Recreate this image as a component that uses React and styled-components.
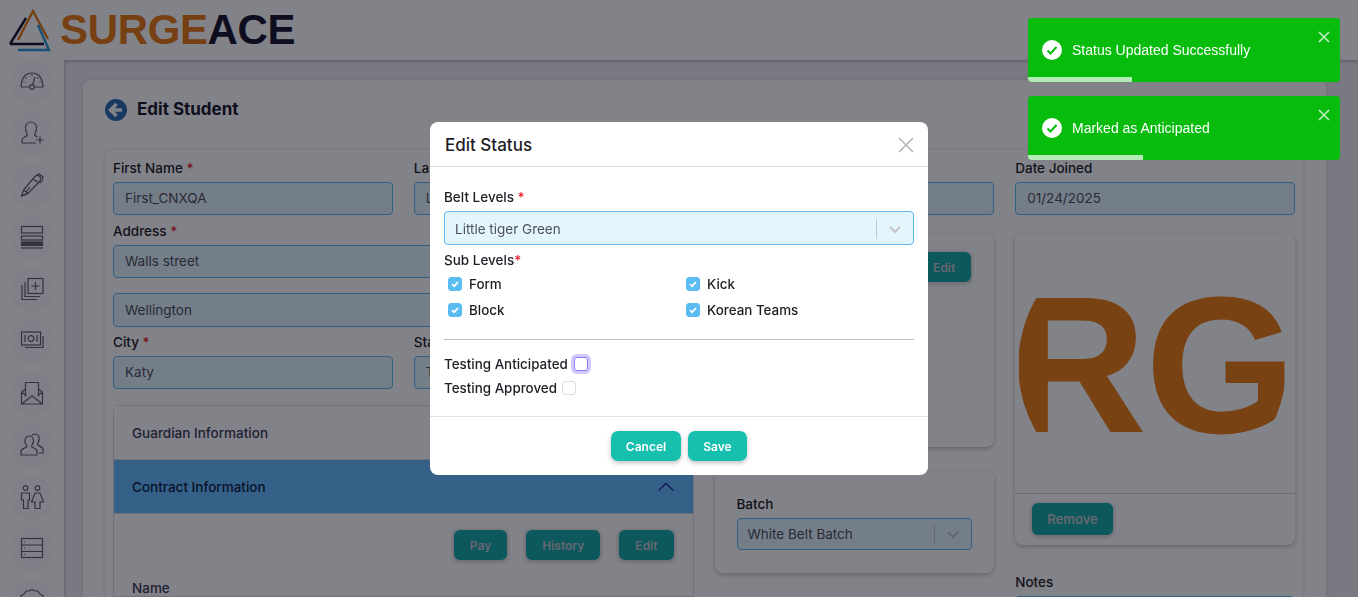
import React from "react";
import styled, { createGlobalStyle } from "styled-components";

const Global = createGlobalStyle`
    html, body {
        margin: 0;
        height: 100%;
        overflow: hidden;
    }
    body {
        font-family: Inter, "Noto Sans", sans-serif;
        color: #1d1d24;
    }
    * {
        box-sizing: border-box;
    }
`;

const Page = styled.div`
    height: 100vh;
    overflow: hidden;
    background: #fff;
    display: flex;
    flex-direction: column;
`;

const Header = styled.header`
    height: 60px;
    flex: none;
    padding-left: 8px;
    display: flex;
    align-items: center;
    gap: 8px;
    background: #fefefe;
`;

const LogoText = styled.div`
    font-family: "Liberation Sans", Arial, sans-serif;
    font-weight: bold;
    font-size: 42px;
    line-height: 60px;
    letter-spacing: -0.35px;
    color: #15152a;
    span {
        color: #e67a10;
    }
`;

const Body = styled.div`
    flex: 1;
    display: flex;
    min-height: 0;
`;

const Sidebar = styled.nav`
    width: 64px;
    flex: none;
    padding-top: 1px;
    display: flex;
    flex-direction: column;
    align-items: center;
    gap: 12px;
    background: #fff;
`;

const NavItem = styled.div`
    width: 40px;
    height: 40px;
    flex: none;
    border-radius: 50%;
    background: #fbfbfc;
    box-shadow: 0 1px 4px rgba(0, 0, 0, 0.08);
    display: flex;
    align-items: center;
    justify-content: center;
    svg {
        width: 24px;
        height: 24px;
        fill: none;
        stroke: #5e5e6c;
        stroke-width: 1.2;
    }
`;

const Main = styled.main`
    flex: 1;
    min-width: 0;
    padding: 20px 32px 0 19px;
    background: #ecedf1;
    box-shadow: inset 1px 2px 3px rgba(0, 0, 0, 0.2);
`;

const Card = styled.section`
    background: #fff;
    border-radius: 8px 8px 0 0;
    padding: 19px 23px 0 22px;
    height: 640px;
    box-shadow: 0 0 4px rgba(0, 0, 0, 0.1);
`;

const TitleRow = styled.div`
    display: flex;
    align-items: center;
    gap: 10px;
    height: 22px;
    margin-bottom: 29px;
    svg {
        width: 22px;
        height: 22px;
    }
`;

const Title = styled.h1`
    margin: 0 0 2px;
    font-size: 17px;
    font-weight: 700;
    color: #17172a;
`;

const FormBox = styled.div`
    padding: 8px;
    height: 600px;
    border-radius: 8px;
    background: #fff;
    box-shadow: 0 0 4px rgba(0, 0, 0, 0.14);
    display: grid;
    grid-template-columns: repeat(4, 1fr);
    grid-template-rows: 57px 1fr;
    column-gap: 21px;
    row-gap: 6px;
`;

const Label = styled.label`
    display: block;
    height: 20px;
    line-height: 20px;
    margin-bottom: 4px;
    font-size: 13.5px;
    font-weight: 500;
    white-space: nowrap;
    color: #1d1d24;
    b {
        color: #e8131f;
        font-weight: 500;
    }
`;

const Input = styled.div`
    height: ${(p) => (p.$tall ? 34 : 33)}px;
    padding: 0 11px;
    line-height: ${(p) => (p.$tall ? 33 : 31)}px;
    font-size: 13.5px;
    color: #4f4f58;
    background: #e3f6fd;
    border: 1px solid #60b8f2;
    border-radius: 4px;
    white-space: nowrap;
    overflow: hidden;
    margin-bottom: ${(p) => p.$gap || 0}px;
`;

const LeftBlock = styled.div`
    grid-column: span 2;
    min-width: 0;
`;

const Split = styled.div`
    display: grid;
    grid-template-columns: 1fr 1fr;
    column-gap: 21px;
    margin-bottom: 16px;
`;

const Accordion = styled.div`
    border: 1px solid #dcdce4;
    border-radius: 6px 6px 0 0;
`;

const AccordionHead = styled.div`
    height: 54px;
    padding: 0 18px;
    display: flex;
    align-items: center;
    justify-content: space-between;
    font-size: 13.5px;
    font-weight: 500;
    color: ${(p) => (p.$open ? "#0d1b3c" : "#3b3b55")};
    background: ${(p) => (p.$open ? "#64bcff" : "#fff")};
    border-bottom: 1px solid #dcdce4;
    svg {
        width: 18px;
        height: 18px;
    }
`;

const AccordionBody = styled.div`
    padding: 16px 19px 0 18px;
`;

const ButtonRow = styled.div`
    display: flex;
    justify-content: flex-end;
    gap: 19px;
    margin-bottom: 20px;
`;

const PageButton = styled.div`
    height: ${(p) => (p.$large ? 32 : 30)}px;
    padding: 0 ${(p) => (p.$large ? 15 : 16)}px;
    display: flex;
    align-items: center;
    border-radius: 6px;
    font-size: ${(p) => (p.$large ? 13 : 12)}px;
    font-weight: 600;
    background: #12aaa6;
    color: #c8c8ce;
    box-shadow: 0 1px 3px 2px rgba(0, 0, 0, 0.14);
`;

const NameLabel = styled.div`
    font-size: 13.5px;
    font-weight: 500;
    color: #3b3b55;
`;

const Panel = styled.div`
    background: #fff;
    border-radius: 8px;
    box-shadow: 0 2px 5px rgba(0, 0, 0, 0.24);
`;

const SideColumn = styled.div`
    padding-top: 12px;
    min-width: 0;
`;

const ProgramPanel = styled(Panel)`
    height: 214px;
    margin-bottom: 24px;
    padding: 19px 23px;
    display: flex;
    justify-content: flex-end;
    align-items: flex-start;
`;

const BatchPanel = styled(Panel)`
    height: 102px;
    padding: 23px 22px;
`;

const SelectBox = styled(Input)`
    display: flex;
    align-items: center;
    justify-content: space-between;
    padding: ${(p) => (p.$modal ? "2px 11px 0 10px" : "0 11px 0 10px")};
    height: ${(p) => (p.$modal ? 34 : 32)}px;
    color: ${(p) => (p.$modal ? "#50505a" : "#4f4f58")};
`;

const SelectArrow = styled.div`
    display: flex;
    align-items: center;
    height: 20px;
    border-left: 1px solid #c8c8c8;
    padding-left: 11px;
    svg {
        width: 14px;
        height: 14px;
    }
`;

const ImagePanel = styled(Panel)`
    height: 312px;
    margin-bottom: 27px;
`;

const AvatarArea = styled.div`
    height: 261px;
    border-bottom: 1px solid #d2d2da;
`;

const Avatar = styled.div`
    width: 100%;
    height: 100%;
    padding: 4px 8px 0 0;
    display: flex;
    align-items: center;
    justify-content: center;
    clip-path: circle(134px at 137px 132px);
    font-family: "Liberation Sans", Arial, sans-serif;
    font-weight: bold;
    font-size: 193px;
    line-height: 256px;
    color: #ea7f12;
    -webkit-text-stroke: 1px #ea7f12;
    white-space: nowrap;
`;

const ImageFoot = styled.div`
    padding: 9px 17px;
    display: flex;
`;

const Overlay = styled.div`
    position: fixed;
    inset: 0;
    background: rgba(6, 6, 20, 0.5);
    display: flex;
    justify-content: center;
    align-items: flex-start;
    padding-top: 122px;
`;

const Modal = styled.div`
    width: 498px;
    height: 353px;
    background: #fff;
    border-radius: 8px;
    display: flex;
    flex-direction: column;
`;

const ModalHead = styled.div`
    height: 45px;
    padding: 1px 14px 0 15px;
    display: flex;
    align-items: center;
    justify-content: space-between;
    border-bottom: 1px solid #dee2e6;
`;

const ModalTitle = styled.h2`
    margin: 0;
    font-size: 17px;
    font-weight: 500;
    color: #1d1d24;
`;

const CloseGlyph = styled.svg`
    width: 16px;
    height: 16px;
    stroke: #b5b5ba;
    stroke-width: 1.6;
    fill: none;
`;

const ModalBody = styled.div`
    flex: 1;
    padding: 20px 14px 0;
`;

const SubGrid = styled.div`
    display: grid;
    grid-template-columns: 238px 1fr;
    row-gap: 6px;
    padding-left: 4px;
    margin-bottom: 19px;
`;

const CheckRow = styled.div`
    display: flex;
    align-items: center;
    gap: 7px;
    height: 20px;
    font-size: 13.4px;
    font-weight: 500;
`;

const Check = styled.span`
    width: 14px;
    height: 14px;
    flex: none;
    border-radius: 3px;
    display: flex;
    align-items: center;
    justify-content: center;
    background: ${(p) => (p.$on ? "#5bbcf2" : "#fff")};
    border: 1px solid ${(p) => (p.$on ? "#5bbcf2" : p.$focus ? "#8a7ff0" : "#dcdcdc")};
    box-shadow: ${(p) => (p.$focus ? "0 0 0 3px #cfcafa" : "none")};
    svg {
        width: 10px;
        height: 10px;
    }
`;

const Divider = styled.hr`
    margin: 0 0 14px;
    border: 0;
    border-top: 1px solid #bcbcbc;
`;

const TestRow = styled(CheckRow)`
    gap: ${(p) => p.$gap}px;
    margin-bottom: 4px;
`;

const ModalFoot = styled.div`
    height: 59px;
    border-top: 1px solid #dee2e6;
    display: flex;
    justify-content: center;
    gap: 7px;
    padding-top: 14px;
`;

const ModalButton = styled.div`
    width: ${(p) => p.$w}px;
    height: 30px;
    display: flex;
    align-items: center;
    justify-content: center;
    border-radius: 7px;
    background: #17bfae;
    color: #fff;
    font-size: 12px;
    font-weight: 600;
    box-shadow: 0 2px 5px rgba(0, 0, 0, 0.25);
`;

const Toasts = styled.div`
    position: fixed;
    top: 18px;
    right: 18px;
    width: 312px;
    display: flex;
    flex-direction: column;
    gap: 14px;
`;

const Toast = styled.div`
    position: relative;
    height: 64px;
    padding: 0 14px;
    border-radius: 4px;
    overflow: hidden;
    background: #07bc0c;
    color: #fff;
    display: flex;
    align-items: center;
    gap: 10px;
    font-family: "Liberation Sans", Arial, sans-serif;
    font-size: 14px;
    svg.tick {
        width: 20px;
        height: 20px;
        flex: none;
    }
`;

const ToastClose = styled.svg`
    position: absolute;
    top: 13px;
    right: 10px;
    width: 12px;
    height: 12px;
    stroke: #fff;
    stroke-width: 1.6;
    opacity: 0.75;
`;

const ToastBar = styled.div`
    position: absolute;
    left: 0;
    bottom: 0;
    height: 5px;
    background: rgba(255, 255, 255, 0.7);
`;

function Chevron({ color = "#c4c4c4" }) {
    return (
        <svg viewBox="0 0 14 14" fill="none" stroke={color} strokeWidth="2">
            <path d="M2 5l5 5 5-5" />
        </svg>
    );
}

function Triangles() {
    return (
        <svg width="44" height="44" viewBox="0 0 44 44" fill="none" strokeWidth="2.4">
            <path d="M2 36L18 10 M2 36H36" stroke="#15152a" />
            <path d="M10 32L25 3 40 31" stroke="#e67a10" />
            <path d="M10 42H41L30 17" stroke="#2a9bd8" />
        </svg>
    );
}

const navIcons = [
    <>
        <path d="M1 18l.6-5C3 7 7 4 12 4s9 3 10.400 9l.6 5h-8.600M9.400 18H1" />
        <circle cx="12" cy="18" r="2.300" />
        <path d="M12.800 15.800L14.800 8M12 5.500v1.500M5.500 8.500l1 1M18.500 8.500l-1 1M3.500 13h1.200M19.300 13h1.200" />
    </>,
    <>
        <path d="M2 22v-3c0-2.500 3.500-3 5-4.500.6-.7.4-1.600-.2-2.300C5.500 10.600 5.300 8 5.500 6 6 3 8.500 1 11 1s5 2 5.500 5c.2 2-.1 4.600-1.300 6.200-.6.7-.8 1.600-.2 2.300.5.5 1.500 1 2.500 1.500M2 22h14" />
        <path d="M20 15.500v7M16.500 19h7" />
    </>,
    <>
        <path d="M1.500 23l2-6L14 4.500c2-2.300 4-2.500 5.500-1.200s1.500 3.500-.5 5.700L8 20.500z" />
        <path d="M1.500 23L8 20.500M3.500 17L8 20.500M13 6l6 4M16.500 2.500L19 1l4 3-1 4-2 2M10 14l-4 5" />
    </>,
    <>
        <rect x="1.500" y="1.500" width="21" height="6.500" />
        <rect x="1.500" y="11" width="21" height="4" />
        <rect x="1.500" y="17" width="21" height="3.500" fill="#5e5e6c" />
        <path d="M1 23h22" />
    </>,
    <>
        <rect x="8" y="1.500" width="15" height="15" />
        <path d="M15.500 5v8M11.500 9h8M5 5v14.500h15M2 8v14.500h15" />
    </>,
    <>
        <rect x="1.500" y="3" width="19" height="13" />
        <circle cx="11" cy="9.500" r="2.800" />
        <path d="M5 6v7M17 6v7M23 7v11.500H5" />
    </>,
    <>
        <path d="M1.500 11v12h21V11l-4-3M1.500 11l4-3M1.500 23l10.500-8 10.500 8M1.500 11l5 4M22.500 11l-5 4" />
        <path d="M5.500 14V1.500h13V14" />
    </>,
    <>
        <path d="M1 22v-4c0-2 4-3 5.500-4 .6-.6.3-1.500-.3-2.200C5 10.500 4.800 8.500 5 7c.5-2.500 2-4 4.200-4s3.800 1.500 4.200 4c.2 1.500 0 3.500-1.200 4.800-.6.7-.9 1.600-.3 2.200 1.500 1 5.100 2 5.100 4v4z" />
        <path d="M12 2.500C12.500 1.500 14 1 15 1c2.200 0 3.800 1.500 4.200 4 .2 1.500 0 3.500-1.200 4.800-.6.7-.9 1.600-.3 2.200 1.500 1 5.300 2 5.300 4v4h-4" />
    </>,
    <>
        <circle cx="5.500" cy="3" r="2.300" />
        <circle cx="17.500" cy="3" r="2.300" />
        <path d="M1.500 8h8v7H8v8.500H3.500V15h-2z" />
        <path d="M15 8h5l3.500 9h-3.500v6.500h-5V17h-3.500z" />
    </>,
    <>
        <rect x="1.500" y="1.500" width="21" height="19" />
        <path d="M1.500 8h21M1.500 14.500h21M4 5h1M4 11h1M4 17.500h1" />
    </>,
    <>
        <path d="M9 2l3-1.500L15 2h3l2 3 3 1.500-1 3.500 1 3.500L20 15l-2 3h-3l-3 2-3-2H6l-2-3-3-1.500L2 10 1 6.500 4 5l2-3z" />
    </>,
];

function App() {
    return (
        <Page>
            <Global />
            <Header>
                <Triangles />
                <LogoText>
                    <span>SURGE</span>ACE
                </LogoText>
            </Header>
            <Body>
                <Sidebar>
                    {navIcons.map((icon, i) => (
                        <NavItem key={i}>
                            <svg viewBox="0 0 24 24">{icon}</svg>
                        </NavItem>
                    ))}
                </Sidebar>
                <Main>
                    <Card>
                        <TitleRow>
                            <svg viewBox="0 0 22 22">
                                <circle cx="11" cy="11" r="11" fill="#2a6fae" />
                                <path
                                    d="M11.500 5L5.500 11l6 6M6 11h11"
                                    fill="none"
                                    stroke="#fff"
                                    strokeWidth="3.400"
                                />
                            </svg>
                            <Title>Edit Student</Title>
                        </TitleRow>
                        <FormBox>
                            <div>
                                <Label>
                                    First Name <b>*</b>
                                </Label>
                                <Input>First_CNXQA</Input>
                            </div>
                            <div>
                                <Label>
                                    Last Name <b>*</b>
                                </Label>
                                <Input>Last_CNXQA</Input>
                            </div>
                            <div>
                                <Label />
                                <Input />
                            </div>
                            <div>
                                <Label>Date Joined</Label>
                                <Input>01/24/2025</Input>
                            </div>
                            <LeftBlock>
                                <Label>
                                    Address <b>*</b>
                                </Label>
                                <Input $gap={15}>Walls street</Input>
                                <Input $tall $gap={5}>
                                    Wellington
                                </Input>
                                <Split>
                                    <div>
                                        <Label>
                                            City <b>*</b>
                                        </Label>
                                        <Input>Katy</Input>
                                    </div>
                                    <div>
                                        <Label>State</Label>
                                        <Input>Texas</Input>
                                    </div>
                                </Split>
                                <Accordion>
                                    <AccordionHead>Guardian Information</AccordionHead>
                                    <AccordionHead $open>
                                        Contract Information
                                        <svg viewBox="0 0 18 18" fill="none" stroke="#1c2f9c" strokeWidth="1.300">
                                            <path d="M1.500 12.500L9 5.500l7.500 7" />
                                        </svg>
                                    </AccordionHead>
                                    <AccordionBody>
                                        <ButtonRow>
                                            <PageButton>Pay</PageButton>
                                            <PageButton>History</PageButton>
                                            <PageButton>Edit</PageButton>
                                        </ButtonRow>
                                        <NameLabel>Name</NameLabel>
                                    </AccordionBody>
                                </Accordion>
                            </LeftBlock>
                            <SideColumn>
                                <ProgramPanel>
                                    <PageButton>Edit</PageButton>
                                </ProgramPanel>
                                <BatchPanel>
                                    <Label>Batch</Label>
                                    <SelectBox>
                                        White Belt Batch
                                        <SelectArrow>
                                            <Chevron />
                                        </SelectArrow>
                                    </SelectBox>
                                </BatchPanel>
                            </SideColumn>
                            <SideColumn>
                                <ImagePanel>
                                    <AvatarArea>
                                        <Avatar>RG</Avatar>
                                    </AvatarArea>
                                    <ImageFoot>
                                        <PageButton $large>Remove</PageButton>
                                    </ImageFoot>
                                </ImagePanel>
                                <Label>Notes</Label>
                                <Input />
                            </SideColumn>
                        </FormBox>
                    </Card>
                </Main>
            </Body>
            <Overlay>
                <Modal>
                    <ModalHead>
                        <ModalTitle>Edit Status</ModalTitle>
                        <CloseGlyph viewBox="0 0 16 16">
                            <path d="M1 1l14 14M15 1L1 15" />
                        </CloseGlyph>
                    </ModalHead>
                    <ModalBody>
                        <Label>
                            Belt Levels <b>*</b>
                        </Label>
                        <SelectBox $modal $gap={5}>
                            Little tiger Green
                            <SelectArrow>
                                <Chevron />
                            </SelectArrow>
                        </SelectBox>
                        <Label>
                            Sub Levels<b>*</b>
                        </Label>
                        <SubGrid>
                            {["Form", "Kick", "Block", "Korean Teams"].map((name) => (
                                <CheckRow key={name}>
                                    <Check $on>
                                        <svg viewBox="0 0 10 10" fill="none" stroke="#fff" strokeWidth="1.800">
                                            <path d="M2 5.200l2.200 2L8 3" />
                                        </svg>
                                    </Check>
                                    {name}
                                </CheckRow>
                            ))}
                        </SubGrid>
                        <Divider />
                        <TestRow $gap={6}>
                            Testing Anticipated
                            <Check $focus />
                        </TestRow>
                        <TestRow $gap={5}>
                            Testing Approved
                            <Check />
                        </TestRow>
                    </ModalBody>
                    <ModalFoot>
                        <ModalButton $w={70}>Cancel</ModalButton>
                        <ModalButton $w={59}>Save</ModalButton>
                    </ModalFoot>
                </Modal>
            </Overlay>
            <Toasts>
                {[
                    ["Status Updated Successfully", 104],
                    ["Marked as Anticipated", 115],
                ].map(([text, width]) => (
                    <Toast key={text}>
                        <svg className="tick" viewBox="0 0 20 20">
                            <circle cx="10" cy="10" r="10" fill="#fff" />
                            <path d="M5.500 10.500l3 3 6-6.500" fill="none" stroke="#07bc0c" strokeWidth="2" />
                        </svg>
                        {text}
                        <ToastClose viewBox="0 0 12 12">
                            <path d="M1 1l10 10M11 1L1 11" />
                        </ToastClose>
                        <ToastBar style={{ width }} />
                    </Toast>
                ))}
            </Toasts>
        </Page>
    );
}

export default App;
